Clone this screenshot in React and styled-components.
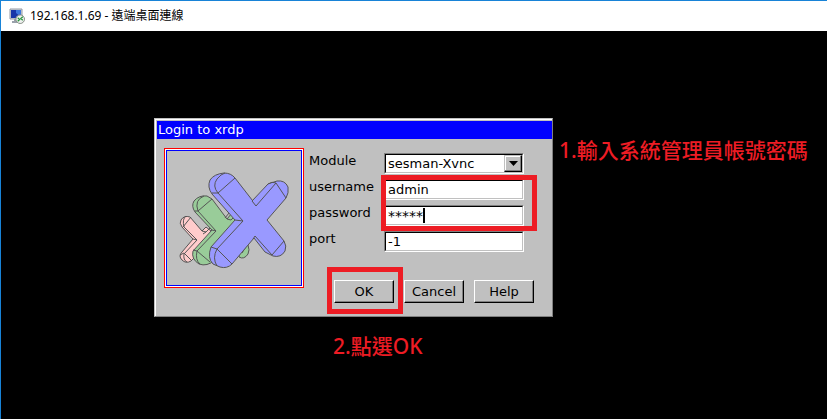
import React from "react";
import styled, { createGlobalStyle, css } from "styled-components";

const GlobalStyle = createGlobalStyle`
  *, *::before, *::after { box-sizing: border-box; }
  html, body, #root { height: 100%; }
  body { margin: 0; background: #000; overflow: hidden; }
`;

const uiFont = css`
  font-family: "DejaVu Sans", Verdana, sans-serif;
  font-size: 13px;
  color: #000;
`;

const Window = styled.div`
  display: flex;
  flex-direction: column;
  min-height: 100%;
  border-top: 1px solid #1883d7;
  border-left: 1px solid #1883d7;
  background: #000;
`;

const WindowBar = styled.header`
  display: flex;
  align-items: center;
  gap: 5px;
  height: 30px;
  padding: 0 8px;
  background: #fff;
`;

const WindowTitle = styled.h1`
  margin: 0;
  font: 400 12px/16px "Noto Sans", "Noto Sans CJK TC", sans-serif;
  color: #000;
`;

const Desktop = styled.main`
  flex: 1;
  padding: 87px 0 0 153px;
`;

const Stage = styled.div`
  position: relative;
  width: fit-content;
`;

const Dialog = styled.section`
  ${uiFont}
  width: 399px;
  border: 1px solid;
  border-color: #c0c0c0 #808080 #808080 #c0c0c0;
  box-shadow: inset 1px 1px 0 #fff;
  padding: 2px 0 13px 2px;
  background: #c0c0c0;
`;

const DialogTitle = styled.h2`
  margin: 0;
  padding-left: 1px;
  font-size: 13px;
  font-weight: 400;
  line-height: 18px;
  color: #fff;
  background: #00f;
`;

const Content = styled.div`
  display: grid;
  grid-template-columns: 140px 1fr;
  column-gap: 5px;
  padding: 9px 18px 0 7px;
`;

const LogoFrame = styled.div`
  width: 140px;
  height: 140px;
  padding: 1px;
  border: 1px solid #f00;
  background: #fff;
`;

const LogoPanel = styled.div`
  border: 1px solid #00f;
  background: #c0c0c0;
  svg { display: block; width: 100%; }
`;

const Form = styled.form`
  display: flex;
  flex-direction: column;
`;

const Fields = styled.div`
  display: grid;
  row-gap: 5px;
  padding: 5px 10px 0 0;
`;

const Field = styled.div`
  display: grid;
  grid-template-columns: 75px 140px;
`;

const Label = styled.label`
  line-height: 16px;
`;

const Well = styled.div`
  position: relative;
  display: flex;
  height: 21px;
  border: 1px solid;
  border-color: #808080 #fff #fff #808080;
`;

const inputStyle = css`
  ${uiFont}
  flex: 1;
  min-width: 0;
  margin: 0;
  padding: 0 0 0 2px;
  border: 1px solid;
  border-color: #000 #c0c0c0 #c0c0c0 #000;
  border-radius: 0;
  outline: 0;
  background: #fff;
  line-height: 16px;
`;

const TextInput = styled.input`
  ${inputStyle}
`;

const MaskedInput = styled(TextInput)`
  font-size: 14px;
`;

const Select = styled.select`
  ${inputStyle}
  appearance: none;
`;

const DropArrow = styled.span`
  position: absolute;
  top: 1px;
  right: 1px;
  display: grid;
  place-items: center;
  width: 18px;
  height: 17px;
  border: 1px solid;
  border-color: #c0c0c0 #000 #000 #c0c0c0;
  box-shadow: inset -1px -1px 0 #808080, inset 1px 1px 0 #fff;
  background: #c0c0c0;
  pointer-events: none;
`;

const Caret = styled.span`
  position: absolute;
  top: 2px;
  left: 38px;
  width: 2px;
  height: 15px;
  background: #000;
`;

const Actions = styled.div`
  display: flex;
  justify-content: flex-end;
  gap: 10px;
  padding-top: 28px;
`;

const Button = styled.button`
  ${uiFont}
  width: 60px;
  height: 23px;
  padding: 0 0 1px;
  border: 1px solid;
  border-color: #fff #000 #000 #fff;
  border-radius: 0;
  box-shadow: inset -1px -1px 0 #808080;
  background: #c0c0c0;
`;

const Highlight = styled.div`
  position: absolute;
  top: ${(p) => p.$top}px;
  left: ${(p) => p.$left}px;
  width: ${(p) => p.$width}px;
  height: ${(p) => p.$height}px;
  border: 5px solid #ed1c24;
  pointer-events: none;
`;

const Note = styled.p`
  position: absolute;
  top: ${(p) => p.$top}px;
  left: ${(p) => p.$left}px;
  margin: 0;
  font: 500 21px/28px "Noto Sans", "Noto Sans CJK TC", sans-serif;
  color: #ed1c24;
  white-space: nowrap;
`;

function RemoteIcon() {
  return (
    <svg width="16" height="16" viewBox="0 0 16 16" aria-hidden="true">
      <path d="M1 1h12v10H1z" fill="#d3d8df" stroke="#9299a5" />
      <path d="M2 2h10v8H2z" fill="#1736a8" />
      <path d="M7 2h5v7L7 5z" fill="#3d78dc" />
      <path d="M5 11h4v2H5zM3 13h6v2H3z" fill="#9aa1ab" />
      <circle cx="11.2" cy="11.2" r="4.3" fill="#eef0ee" stroke="#858d86" />
      <path d="M8.7 9.7l2 1.7-2 1.8M13.8 8.7l-2 1.8 2 1.8" fill="none" stroke="#23963a" strokeWidth="1.2" />
    </svg>
  );
}

function XrdpLogo() {
  return (
    <svg viewBox="167 151 134 134" role="img" aria-label="xrdp">
      <g stroke="#555" strokeWidth="1" strokeLinejoin="round">
        <g fill="#fcc">
          <path d="M182 227Q179 223 181 220Q184 215 190 217L202 231L206 227L211 231L212 240L191 261Q186 264 182 260Q178 256 182 252L193 239Z" />
          <path d="M191 217L183 227M186 216Q182 219 184 227L197 240L184 254Q183 260 187 262M193 239L197 240M180 255L184 253L191 260M202 231L206 232L210 228M206 232L203 234" fill="none" />
        </g>
        <g fill="#9c9">
          <path d="M239 257Q244 260 248 254Q250 250 248 245L242 240Z" />
          <path d="M242 253L247 245" fill="none" />
          <path d="M195 212Q191 206 194 201Q199 195 207 196L212 199L227 219L232 213L240 222L215 260Q207 267 199 264Q191 259 193 251L212 230Z" />
          <path d="M212 199L198 211L216 231L197 251Q195 260 200 264M195 211H198Q194 200 204 196M212 230L216 231M193 250L197 251L210 262M225 218L229 213M227 219L231 220L235 216" fill="none" />
        </g>
        <g fill="#99f">
          <path d="M212 194Q207 187 210 180Q214 174 224 173Q231 173 235 178L256 205L268 184L277 181Q285 180 288 187Q289 193 286 198L267 220L284 241Q287 246 285 251Q281 258 273 256L265 252L254 238L232 264Q227 269 220 267L213 264Q207 258 211 247L235 220Z" />
          <path d="M252 201L268 184L276 183L256 206Z" stroke="none" />
          <path d="M235 178L218 193L243 221L217 249L232 264M218 193H212M218 193Q212 186 217 179Q221 174 225 173M235 220L243 221M211 247L217 249Q212 258 217 266M252 201L268 184M276 183L256 206L252 201M276 183L286 198M255 236L272 255L284 241M255 236L253 239M268 184Q272 181 276 183" fill="none" />
        </g>
      </g>
    </svg>
  );
}

export default function App() {
  return (
    <>
      <GlobalStyle />
      <Window>
        <WindowBar>
          <RemoteIcon />
          <WindowTitle>192.168.1.69 - 遠端桌面連線</WindowTitle>
        </WindowBar>
        <Desktop>
          <Stage>
            <Dialog>
              <DialogTitle>Login to xrdp</DialogTitle>
              <Content>
                <LogoFrame>
                  <LogoPanel>
                    <XrdpLogo />
                  </LogoPanel>
                </LogoFrame>
                <Form onSubmit={(e) => e.preventDefault()}>
                  <Fields>
                    <Field>
                      <Label htmlFor="module">Module</Label>
                      <Well>
                        <Select id="module" defaultValue="sesman-Xvnc">
                          <option>sesman-Xvnc</option>
                        </Select>
                        <DropArrow>
                          <svg width="9" height="5" viewBox="0 0 9 5" aria-hidden="true">
                            <path d="M0 0h9L4.5 5z" />
                          </svg>
                        </DropArrow>
                      </Well>
                    </Field>
                    <Field>
                      <Label htmlFor="username">username</Label>
                      <Well>
                        <TextInput id="username" defaultValue="admin" />
                      </Well>
                    </Field>
                    <Field>
                      <Label htmlFor="password">password</Label>
                      <Well>
                        <MaskedInput id="password" defaultValue="*****" />
                        <Caret />
                      </Well>
                    </Field>
                    <Field>
                      <Label htmlFor="port">port</Label>
                      <Well>
                        <TextInput id="port" defaultValue="-1" />
                      </Well>
                    </Field>
                  </Fields>
                  <Actions>
                    <Button type="submit">OK</Button>
                    <Button type="button">Cancel</Button>
                    <Button type="button">Help</Button>
                  </Actions>
                </Form>
              </Content>
            </Dialog>
            <Highlight $top={57} $left={227} $width={156} $height={56} />
            <Highlight $top={149} $left={173} $width={76} $height={47} />
            <Note $top={18} $left={405}>1.輸入系統管理員帳號密碼</Note>
            <Note $top={214} $left={179}>2.點選OK</Note>
          </Stage>
        </Desktop>
      </Window>
    </>
  );
}
